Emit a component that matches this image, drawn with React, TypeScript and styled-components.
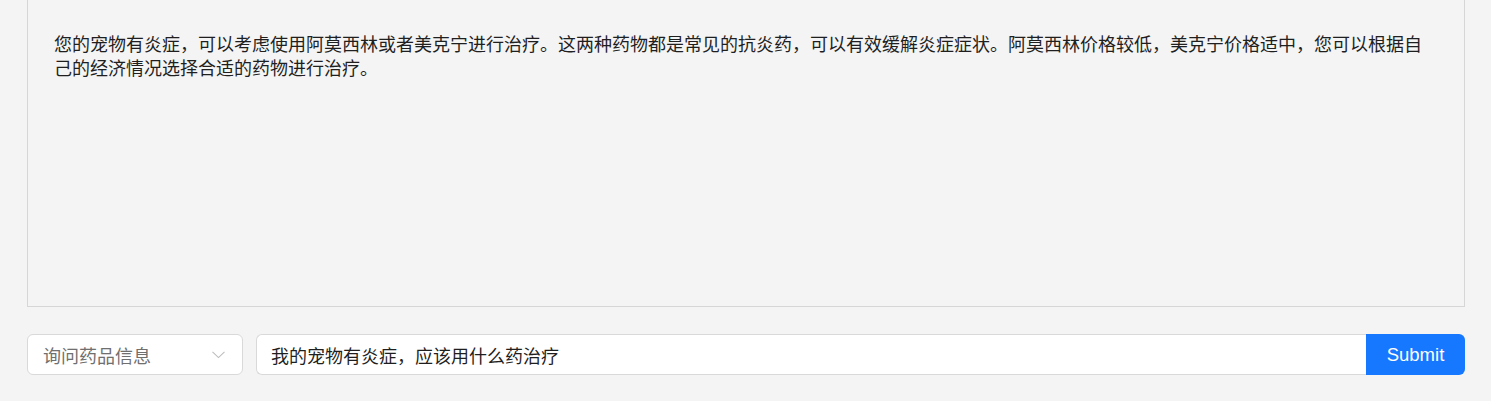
import React from 'react';
import styled, { createGlobalStyle } from 'styled-components';

const FONT = '"Liberation Sans", "Noto Sans CJK SC", sans-serif';

const answer =
  '您的宠物有炎症，可以考虑使用阿莫西林或者美克宁进行治疗。这两种药物都是常见的抗炎药，可以有效缓解炎症症状。阿莫西林价格较低，美克宁价格适中，您可以根据自己的经济情况选择合适的药物进行治疗。';

const GlobalStyle = createGlobalStyle`
  html, body {
    margin: 0;
    padding: 0;
    background: #ffffff;
  }
  body {
    font-family: ${FONT};
  }
`;

export default function App() {
  return (
    <>
      <GlobalStyle />
      <Page>
        <AnswerPanel>
          <AnswerText>{answer}</AnswerText>
        </AnswerPanel>
        <AskRow>
          <Select>
            <SelectValue>询问药品信息</SelectValue>
            <Chevron width="13" height="8" viewBox="0 0 13 8">
              <path d="M0.5 0.8 L6.5 6.6 L12.5 0.8" fill="none" stroke="#bdbdbd" strokeWidth="1.1" />
            </Chevron>
          </Select>
          <Search>
            <QuestionInput defaultValue="我的宠物有炎症，应该用什么药治疗" />
            <SubmitButton type="button">Submit</SubmitButton>
          </Search>
        </AskRow>
      </Page>
    </>
  );
}

const Page = styled.div`
  width: 1491px;
  box-sizing: border-box;
  padding: 0 26px 26px 27px;
  background: #f4f4f4;
  display: flex;
  flex-direction: column;
  gap: 27px;
`;

const AnswerPanel = styled.div`
  height: 307px;
  box-sizing: border-box;
  border: 1px solid #d6d6d6;
  border-top: none;
  background: #f4f4f4;
  padding: 33px 26px 0 26px;
`;

const AnswerText = styled.p`
  margin: 0;
  font-size: 18px;
  line-height: 24px;
  color: #1f1f1f;
`;

const AskRow = styled.div`
  display: flex;
  align-items: stretch;
  gap: 13px;
  height: 41px;
`;

const Select = styled.div`
  width: 216px;
  box-sizing: border-box;
  display: flex;
  align-items: center;
  justify-content: space-between;
  padding: 0 17px 0 15px;
  background: #ffffff;
  border: 1px solid #d9d9d9;
  border-radius: 6px;
`;

const SelectValue = styled.span`
  font-size: 18px;
  color: #6f6f6f;
`;

const Chevron = styled.svg`
  display: block;
  margin-top: 1px;
`;

const Search = styled.div`
  flex: 1;
  display: flex;
`;

const QuestionInput = styled.input`
  flex: 1;
  min-width: 0;
  box-sizing: border-box;
  height: 100%;
  margin: 0;
  padding: 0 14px;
  border: 1px solid #d9d9d9;
  border-right: none;
  border-radius: 6px 0 0 6px;
  background: #ffffff;
  font-family: ${FONT};
  font-size: 18px;
  color: #1f1f1f;
  outline: none;
`;

const SubmitButton = styled.button`
  width: 99px;
  height: 100%;
  margin: 0;
  padding: 0;
  border: none;
  border-radius: 0 6px 6px 0;
  background: #1677ff;
  color: #ffffff;
  font-family: ${FONT};
  font-size: 18.5px;
  cursor: pointer;
`;
